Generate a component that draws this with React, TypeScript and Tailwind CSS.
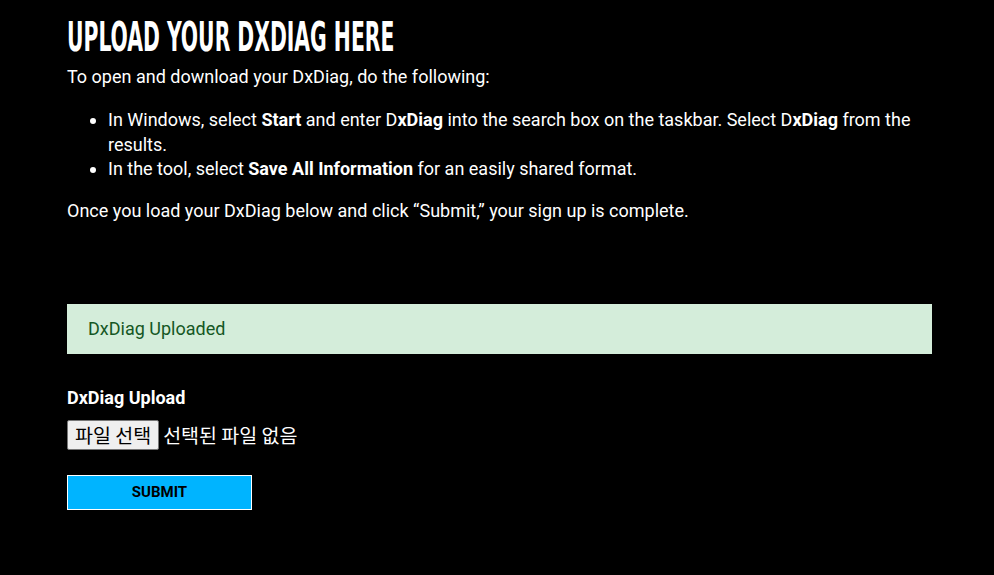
export default function App() {
  return (
    <div className="min-h-[575px] w-full bg-black text-white" style={{ fontFamily: "Roboto, 'Noto Sans CJK KR', sans-serif" }}>
      <div className="mx-[67px] w-[865px] pt-[15px]">
        <h1
          className="text-[40px] leading-[44px] font-bold tracking-[0px] origin-left scale-x-[0.565] whitespace-nowrap"
          style={{ fontFamily: "'DejaVu Sans Condensed', 'DejaVu Sans', sans-serif" }}
        >
          UPLOAD YOUR DXDIAG HERE
        </h1>
        <p className="mt-[6px] text-[18px] leading-[24px]">To open and download your DxDiag, do the following:</p>
        <ul className="mt-[19px] list-disc pl-[41px] text-[18px] leading-[24.5px]">
          <li>
            In Windows, select <b>Start</b> and enter D<b>xDiag</b> into the search box on the taskbar. Select D<b>xDiag</b> from the results.
          </li>
          <li>
            In the tool, select <b>Save All Information</b> for an easily shared format.
          </li>
        </ul>
        <p className="mt-[17px] text-[18px] leading-[24px]">Once you load your DxDiag below and click “Submit,” your sign up is complete.</p>
        <div className="mt-[81px] h-[50px] bg-[#d4edda] text-[#155724] flex items-center pl-[21px] text-[18px]">
          DxDiag Uploaded
        </div>
        <div className="mt-[33px] text-[18px] font-bold leading-[22px]">DxDiag Upload</div>
        <div className="mt-[11px] flex items-center text-[19.5px]" style={{ fontFamily: "'Noto Sans CJK KR', sans-serif" }}>
          <span className="h-[30px] px-[7px] flex items-center bg-[#efefef] text-black border border-[#767676] rounded-[2px]">파일 선택</span>
          <span className="ml-[4px] text-white">선택된 파일 없음</span>
        </div>
        <button className="mt-[25px] w-[185px] h-[35px] bg-[#00b4ff] border border-white text-black font-bold text-[15px]">
          SUBMIT
        </button>
      </div>
    </div>
  );
}
